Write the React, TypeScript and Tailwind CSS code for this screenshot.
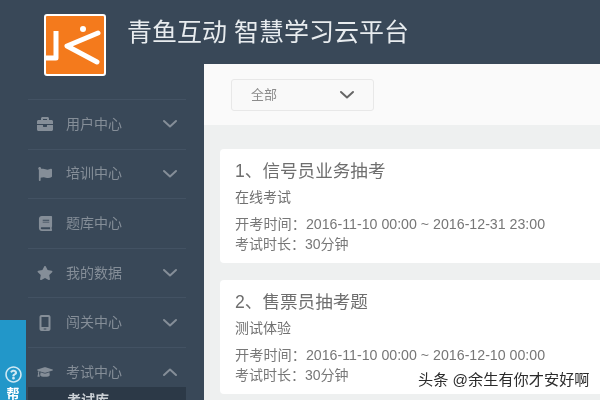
import React from "react";
import { FaBriefcase, FaFlag, FaBook, FaStar, FaGraduationCap, FaRegQuestionCircle } from "react-icons/fa";
import { FaMobileScreen } from "react-icons/fa6";

const font = { fontFamily: '"Liberation Sans","Noto Sans CJK SC",sans-serif' };

function Chevron({ up = false, className = "" }: { up?: boolean; className?: string }) {
  return (
    <svg width="16" height="10" viewBox="0 0 16 10" fill="none" className={className}>
      <path d={up ? "M2 8 L8 2.5 L14 8" : "M2 2 L8 7.5 L14 2"} stroke="currentColor" strokeWidth="2" strokeLinecap="round" strokeLinejoin="round" />
    </svg>
  );
}

const menu = [
  { icon: <FaBriefcase size={16} />, label: "用户中心", arrow: "down" },
  { icon: <FaFlag size={14} />, label: "培训中心", arrow: "down" },
  { icon: <FaBook size={15} />, label: "题库中心", arrow: "" },
  { icon: <FaStar size={16} />, label: "我的数据", arrow: "down" },
  { icon: <FaMobileScreen size={16} />, label: "闯关中心", arrow: "down" },
  { icon: <FaGraduationCap size={18} />, label: "考试中心", arrow: "up" },
];

function Card({ title, sub, time }: { title: string; sub: string; time: string }) {
  return (
    <div className="-mr-[20px] h-[114px] rounded-[4px] bg-white pl-[15px] pt-[10px] text-[#777]">
      <div className="text-[17.6px] leading-[24px] text-[#6e6e6e]">{title}</div>
      <div className="mt-[4px] text-[14px] leading-[20px] text-[#707070]">{sub}</div>
      <div className="mt-[7px] whitespace-nowrap text-[14.2px] leading-[20px]">{time}</div>
      <div className="text-[14px] leading-[20px]">考试时长：30分钟</div>
    </div>
  );
}

export default function App() {
  return (
    <div style={font} className="relative flex h-[400px] w-[600px] flex-col overflow-hidden bg-[#394858] blur-[0.6px]">
      <header className="flex h-[64px] shrink-0">
        <div className="z-10 ml-[44px] mt-[14px] flex h-[62px] w-[62px] items-center justify-center rounded-[3px] border-[2px] border-white bg-[#f47a1c]">
          <svg width="58" height="58" viewBox="0 0 58 58" fill="none">
            <path d="M10 15 V42 H0" stroke="#fff" strokeWidth="5" strokeLinejoin="round" />
            <path d="M52 17 L21 30 L51 46" stroke="#fff" strokeWidth="5" strokeLinecap="round" strokeLinejoin="round" />
            <circle cx="37" cy="13" r="3" fill="#fff" />
          </svg>
        </div>
        <h1 className="ml-[21px] mt-[15px] whitespace-nowrap text-[25px] leading-[34px] text-[#e8ecef]">青鱼互动 智慧学习云平台</h1>
      </header>
      <div className="flex min-h-0 flex-1">
        <nav className="w-[204px] shrink-0 pl-[28px] pr-[18px] pt-[35px]">
          {menu.map((m, i) => (
            <div key={m.label} className={`flex items-center border-t border-[#435263] text-[#858e98] ${i === 5 ? "h-[40px] pt-[10px]" : "h-[49.6px]"}`}>
              <span className="ml-[9px] mr-[13px] flex w-[16px] justify-center">{m.icon}</span>
              <span className="text-[14px]">{m.label}</span>
              {m.arrow && <Chevron up={m.arrow === "up"} className="ml-auto mr-[8px]" />}
            </div>
          ))}
          <div className="h-[20px] bg-[#2c3947] pl-[39px] pt-[3px] text-[14px] font-bold leading-[20px] text-[#ccd1d6]">考试库</div>
        </nav>
        <main className="min-w-0 flex-1 rounded-tl-[3px] bg-[#eef0f0]">
          <div className="flex h-[61px] items-center bg-[#fafafa] pl-[27px]">
            <div className="flex h-[32px] w-[143px] items-center justify-between rounded-[3px] border border-[#e8e8e8] bg-[#f9f9f9] pl-[19px] pr-[18px] text-[13px] text-[#8c8c8c]">
              全部
              <Chevron className="text-[#666]" />
            </div>
          </div>
          <div className="flex flex-col gap-[17px] pl-[16px] pt-[24px]">
            <Card title="1、信号员业务抽考" sub="在线考试" time="开考时间：2016-11-10 00:00 ~ 2016-12-31 23:00" />
            <Card title="2、售票员抽考题" sub="测试体验" time="开考时间：2016-11-10 00:00 ~ 2016-12-10 00:00" />
          </div>
        </main>
      </div>
      <div className="absolute left-0 top-[320px] flex h-[80px] w-[26px] flex-col items-center justify-end bg-[#2297c9] text-white">
        <FaRegQuestionCircle size={17} className="mb-[4px] text-[#cfe8f3]" />
        <span className="mb-[-1px] text-[13px] font-bold leading-[14px]">帮</span>
      </div>
      <div className="absolute left-[418px] top-[372px] whitespace-nowrap text-[15.2px] leading-[16px] text-[#2b2b2b] [text-shadow:0_0_2px_#fff]">头条 @余生有你才安好啊</div>
    </div>
  );
}
